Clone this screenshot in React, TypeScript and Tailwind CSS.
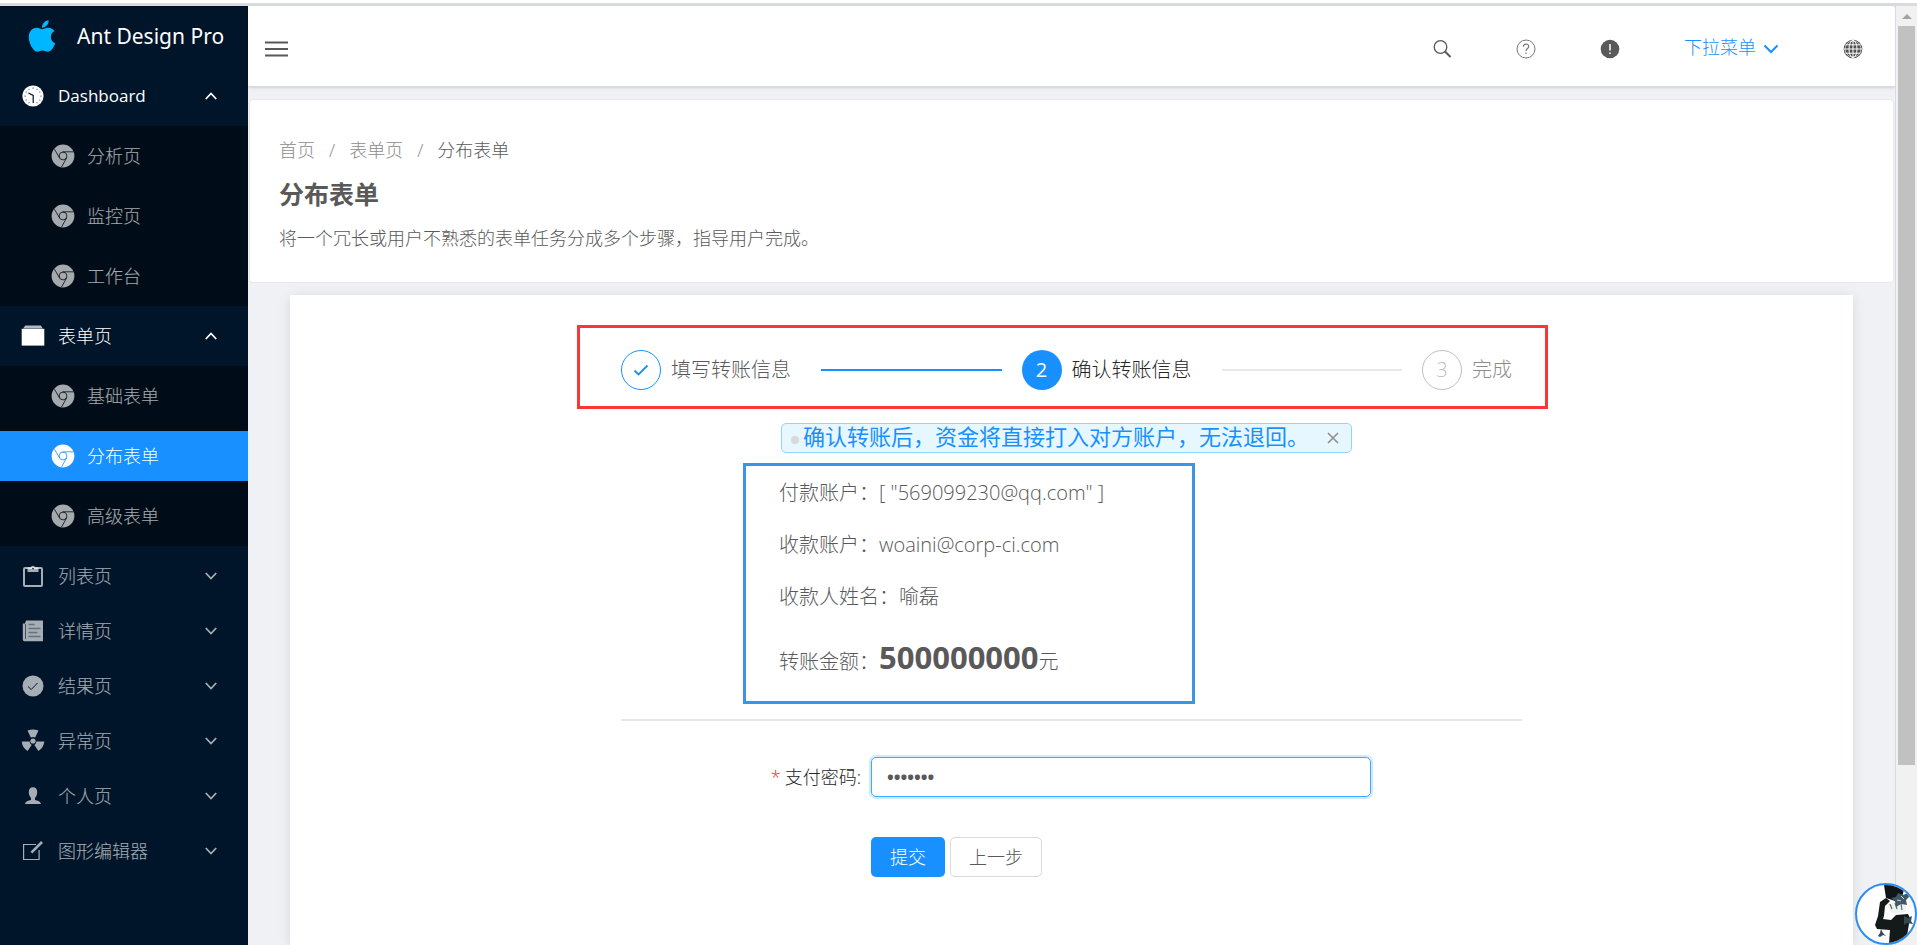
import { useState } from 'react';
import type { ReactNode } from 'react';
import { FaApple } from 'react-icons/fa';

type MenuChild = {
  label: string;
  active?: boolean;
};

type MenuGroup = {
  label: string;
  icon: ReactNode;
  children: MenuChild[];
  open?: boolean;
};

const ChromeIcon = ({ line }: { line: string }) => (
  <svg viewBox="0 0 24 24" className="size-6 shrink-0" fill="currentColor">
    <circle cx="12" cy="12" r="11.4" />
    <g fill="none" stroke={line} strokeWidth=".8">
      <circle cx="12" cy="12" r="3.9" />
      <path d="M11.5 7.8H22.6" />
      <path d="M8.6 14L3.4 5.2" />
      <path d="M15.6 13.8L10.6 23" />
    </g>
  </svg>
);

const ClockIcon = () => (
  <svg viewBox="0 0 22 22" className="size-[22px]">
    <circle cx="11" cy="11" r="10.6" fill="currentColor" />
    <g fill="none" stroke="#001529" strokeWidth="1.2">
      <path d="M6.4 8L11.2 10.4V18" />
    </g>
    <g fill="#001529">
      <circle cx="11" cy="3" r=".6" />
      <circle cx="15" cy="4.2" r=".5" />
      <circle cx="17.9" cy="7" r=".5" />
      <circle cx="19" cy="11" r=".6" />
      <circle cx="17.9" cy="15" r=".5" />
      <circle cx="15" cy="17.8" r=".5" />
      <circle cx="7" cy="17.8" r=".5" />
      <circle cx="4.1" cy="15" r=".5" />
      <circle cx="3" cy="11" r=".6" />
      <circle cx="4.1" cy="7" r=".5" />
      <circle cx="7" cy="4.2" r=".5" />
    </g>
  </svg>
);

const BoxIcon = () => (
  <svg viewBox="0 0 22 22" className="size-[22px] overflow-visible" fill="currentColor">
    <path d="M3.2 .4h15.6l2 3H1.2z" opacity=".7" />
    <path d="M-.3 3.8h22.6v16.8H-.3z" />
  </svg>
);

const ClipboardIcon = () => (
  <svg viewBox="0 0 22 22" className="size-[22px]">
    <rect x="2" y="3" width="18" height="18" rx="1" fill="none" stroke="currentColor" strokeWidth="2" />
    <path d="M5.5 2.5h3.2a2.4 2.4 0 0 1 4.6 0h3.2v4.5h-11z" fill="currentColor" />
    <circle cx="11" cy="3.6" r=".8" fill="#001529" />
  </svg>
);

const ArticleIcon = () => (
  <svg viewBox="0 0 22 22" className="size-[22px]">
    <path d="M4 .5h17v20.8H2.5A1.8 1.8 0 0 1 .8 19.5V3.5H3z" fill="currentColor" />
    <path d="M3.5 4v15" stroke="#001529" strokeWidth=".6" />
    <path d="M6.5 4.5h6M6.5 8.5h12M6.5 12.5h9M6.5 16.5h12" stroke="#66717c" strokeWidth="1.5" />
  </svg>
);

const CheckIcon = () => (
  <svg viewBox="0 0 22 22" className="size-[22px]">
    <circle cx="11" cy="11" r="10.5" fill="currentColor" />
    <path d="M6 11.5l3.2 3L15.5 8" fill="none" stroke="#001529" strokeWidth="1" />
  </svg>
);

const RadiationIcon = () => (
  <svg viewBox="0 0 22 22" className="size-[22px] overflow-visible" fill="currentColor">
    <path d="M5.5 .6a14 14 0 0 1 11 0L13.2 7.6a5 5 0 0 0-4.4 0z" />
    <path d="M-.3 11.6H7.6a4 4 0 0 0 2 3.4L5.6 21A12 12 0 0 1-.3 11.6z" />
    <path d="M22.3 11.6H14.4a4 4 0 0 1-2 3.4L16.4 21A12 12 0 0 0 22.3 11.6z" />
    <circle cx="11" cy="11" r="2.6" />
  </svg>
);

const UserIcon = () => (
  <svg viewBox="0 0 22 22" className="size-[22px]" fill="currentColor">
    <path d="M11 2.2c2.7 0 4.2 1.8 4.2 4.8 0 2.5-.9 4.5-2.2 6v1.9c2.5.6 5.7 1.4 6 4.1H3c.3-2.7 3.5-3.5 6-4.1V13C7.7 11.5 6.800 9.500 6.800 7c0-3 1.500-4.800 4.200-4.800z" />
  </svg>
);

const EditIcon = () => (
  <svg viewBox="0 0 22 22" className="size-[22px]" fill="none" stroke="currentColor">
    <path d="M14 4.5H1.6v15h15.5V10" strokeWidth="1.2" />
    <path d="M9.4 12.6L20 2" strokeWidth="2.6" />
  </svg>
);

const Chevron = ({ up }: { up?: boolean }) => (
  <svg viewBox="0 0 12 8" className="h-2 w-3" fill="none" stroke="currentColor" strokeWidth="1.8">
    <path d={up ? 'M.8 7L6 1.5 11.2 7' : 'M.8 1L6 6.5 11.2 1'} />
  </svg>
);

const menu: MenuGroup[] = [
  {
    label: 'Dashboard',
    icon: <ClockIcon />,
    open: true,
    children: [{ label: '分析页' }, { label: '监控页' }, { label: '工作台' }],
  },
  {
    label: '表单页',
    icon: <BoxIcon />,
    open: true,
    children: [{ label: '基础表单' }, { label: '分布表单', active: true }, { label: '高级表单' }],
  },
  { label: '列表页', icon: <ClipboardIcon />, children: [] },
  { label: '详情页', icon: <ArticleIcon />, children: [] },
  { label: '结果页', icon: <CheckIcon />, children: [] },
  { label: '异常页', icon: <RadiationIcon />, children: [] },
  { label: '个人页', icon: <UserIcon />, children: [] },
  { label: '图形编辑器', icon: <EditIcon />, children: [] },
];

const details = [
  { label: '付款账户', value: '[ "569099230@qq.com" ]' },
  { label: '收款账户', value: 'woaini@corp-ci.com' },
  { label: '收款人姓名', value: '喻磊' },
];

function Sidebar() {
  const [opened, setOpened] = useState(menu.map((group) => !!group.open));

  const toggle = (index: number) => {
    setOpened(opened.map((value, i) => (i === index ? !value : value)));
  };

  return (
    <aside className="w-62 shrink-0 bg-[#001529] text-white/65">
      <div className="flex h-15 items-center gap-[21px] pl-7 text-white">
        <FaApple className="h-9 w-7 text-[#00b7ff]" />
        <span className="font-['Noto_Sans',sans-serif] text-[21px] font-normal whitespace-nowrap">Ant Design Pro</span>
      </div>
      <nav>
        {menu.map((group, index) => (
          <div key={group.label} className={opened[index] ? '' : 'pt-[5px]'}>
            <button
              type="button"
              onClick={() => toggle(index)}
              className={
                opened[index]
                  ? 'flex h-15 w-full items-center pr-[31px] pl-[22px] text-white'
                  : 'flex h-[50px] w-full items-center pr-[31px] pl-[22px]'
              }
            >
              {group.icon}
              <span
                className={
                  group.label === 'Dashboard'
                    ? 'ml-3.5 flex-1 text-left text-[17px] font-normal'
                    : 'ml-3.5 flex-1 text-left'
                }
              >
                {group.label}
              </span>
              <Chevron up={opened[index]} />
            </button>
            {opened[index] && group.children.length > 0 && (
              <ul className="bg-[#000c17]">
                {group.children.map((item) => (
                  <li key={item.label} className="py-[5px]">
                    <a
                      href="#"
                      className={
                        item.active
                          ? 'flex h-[50px] items-center gap-3 bg-[#1890ff] pl-[51px] text-white'
                          : 'flex h-[50px] items-center gap-3 pl-[51px]'
                      }
                    >
                      <ChromeIcon line={item.active ? '#1890ff' : '#000c17'} />
                      {item.label}
                    </a>
                  </li>
                ))}
              </ul>
            )}
          </div>
        ))}
      </nav>
    </aside>
  );
}

function Header() {
  return (
    <header className="flex h-[81px] shrink-0 items-center justify-between rounded-tr border-b border-[#d7dae2] bg-white pt-1.5 pr-8 pl-4 shadow-sm">
      <button type="button" aria-label="menu">
        <svg viewBox="0 0 24 18" className="h-[18px] w-6" stroke="#595959" strokeWidth="2.2">
          <path d="M1 2.5h23M1 9h23M1 15.5h23" />
        </svg>
      </button>
      <div className="flex items-center gap-16">
        <button type="button" aria-label="search">
          <svg viewBox="0 0 20 20" className="size-5" fill="none" stroke="#595959">
            <circle cx="8.5" cy="8" r="6.3" strokeWidth="1.3" />
            <path d="M13 12.5L18.5 18" strokeWidth="2" />
          </svg>
        </button>
        <button type="button" aria-label="help">
          <svg viewBox="0 0 20 20" className="size-5" fill="none" stroke="#777">
            <circle cx="10" cy="10" r="9" />
            <path d="M7.3 7.8c0-3.6 5.4-3.6 5.4-.3 0 2-2.7 2.2-2.7 4.5M10 13.6v1.4" strokeWidth="1.2" />
          </svg>
        </button>
        <button type="button" aria-label="notice">
          <svg viewBox="0 0 20 20" className="size-5">
            <circle cx="10" cy="10" r="9.3" fill="#595959" />
            <path d="M10 5v6.5M10 13.5v1.5" stroke="#fff" strokeWidth="1.5" />
          </svg>
        </button>
        <button type="button" className="flex items-center gap-[7px] text-[#1890ff]">
          <span className="-mt-1">下拉菜单</span>
          <svg viewBox="0 0 16 10" className="h-2.5 w-4" fill="none" stroke="currentColor" strokeWidth="2">
            <path d="M1.5 1.5L8 8l6.5-6.5" />
          </svg>
        </button>
        <button type="button" aria-label="language">
          <svg viewBox="0 0 20 20" className="size-5">
            <circle cx="10" cy="10" r="9.3" fill="#505050" />
            <g fill="none" stroke="#fff" strokeWidth="1">
              <ellipse cx="10" cy="10" rx="4" ry="8.6" />
              <circle cx="10" cy="10" r="8" strokeWidth=".6" />
              <path d="M10 1v18M1 10h18M2.5 5.8h15M2.5 14.2h15" />
            </g>
          </svg>
        </button>
      </div>
    </header>
  );
}

function PageHeader() {
  return (
    <section className="mx-px mt-3 shrink-0 rounded-sm border border-[#e6e8eb] bg-white px-[29px] pt-9 pb-[30px]">
      <ol className="flex h-7 items-center gap-3.5 text-[#8c8c8c]">
        <li>
          <a href="#">首页</a>
        </li>
        <li>/</li>
        <li>
          <a href="#">表单页</a>
        </li>
        <li>/</li>
        <li className="text-[#595959]">分布表单</li>
      </ol>
      <h1 className="mt-3 text-[25px] leading-9 font-bold text-[#595959]">分布表单</h1>
      <p className="mt-3 leading-7">将一个冗长或用户不熟悉的表单任务分成多个步骤，指导用户完成。</p>
    </section>
  );
}

function Steps() {
  return (
    <div className="relative">
      <ol className="flex items-center pr-2.5 text-xl leading-10">
        <li className="flex flex-1 items-center">
          <span className="flex size-10 items-center justify-center rounded-full border border-[#1890ff]">
            <svg viewBox="0 0 16 12" className="h-3 w-4" fill="none" stroke="#1890ff" strokeWidth="1.8">
              <path d="M1.5 6.5l4 4 9-9" />
            </svg>
          </span>
          <span className="ml-2.5">填写转账信息</span>
          <span className="mr-5 ml-[30px] h-0.5 flex-1 bg-[#1890ff]" />
        </li>
        <li className="flex flex-1 items-center">
          <span className="flex size-10 items-center justify-center rounded-full bg-[#1890ff] font-normal text-white">
            2
          </span>
          <span className="ml-2.5 text-[#262626]">确认转账信息</span>
          <span className="mr-5 ml-[30px] h-0.5 flex-1 bg-[#e8e8e8]" />
        </li>
        <li className="flex items-center text-[#8c8c8c]">
          <span className="flex size-10 items-center justify-center rounded-full border border-[#bfbfbf] text-[#bfbfbf]">
            3
          </span>
          <span className="ml-2.5">完成</span>
        </li>
      </ol>
      {/* Highlight frame over the steps */}
      <div className="pointer-events-none absolute -top-[25px] -right-[26px] -bottom-[19px] -left-11 border-3 border-[#fc3535]" />
    </div>
  );
}

function Confirm() {
  const [password, setPassword] = useState('1234567');
  const [showTag, setShowTag] = useState(true);

  return (
    <main className="mx-[42px] mt-3 flex-1 bg-white pt-[55px] shadow-[0_2px_12px_rgba(0,0,0,0.1)]">
      <div className="mx-auto max-w-[901px]">
        <Steps />
        {showTag && (
          <div className="mt-[33px] ml-40 flex h-[30px] w-fit items-center rounded-[5px] border border-[#91d5ff] bg-[#e6f7ff] pr-3 pl-[9px] text-[22px] font-normal whitespace-nowrap text-[#1890ff]">
            <span className="mt-1 mr-1 size-2 rounded-full bg-[#d9d9d9]" />
            <span className="-mt-1">确认转账后，资金将直接打入对方账户，无法退回。</span>
            <button type="button" aria-label="close" className="ml-[18px]" onClick={() => setShowTag(false)}>
              <svg viewBox="0 0 12 12" className="size-3" stroke="#8c8c8c" strokeWidth="1.5">
                <path d="M1 1l10 10M11 1L1 11" />
              </svg>
            </button>
          </div>
        )}

        <div className="mt-2.5 ml-[122px] flex w-[452px] flex-col gap-5 border-3 border-[#3b94e6] pt-[11px] pb-[15px] pl-[33px] text-xl leading-8">
          {details.map((item) => (
            <p key={item.label}>
              {item.label}：{item.value}
            </p>
          ))}
          <p className="leading-12">
            转账金额：<strong className="text-[31px] font-bold">500000000</strong>元
          </p>
        </div>

        <hr className="mt-[15px] h-0.5 border-0 bg-[#e8e8e8]" />

        <form className="mt-9" onSubmit={(e) => e.preventDefault()}>
          <div className="flex items-center">
            <label htmlFor="password" className="w-[250px] pr-2.5 text-right text-[#262626]">
              <span className="mr-1 text-[#f5222d]">*</span>
              支付密码:
            </label>
            <input
              id="password"
              type="password"
              value={password}
              onChange={(e) => setPassword(e.target.value)}
              className="h-10 w-[500px] rounded-[5px] border border-[#40a9ff] px-[15px] font-bold shadow-[0_0_0_2px_rgba(24,144,255,0.2)] outline-none"
            />
          </div>
          <div className="mt-10 flex gap-[5px] pl-[250px]">
            <button type="submit" className="h-10 rounded-[5px] bg-[#1890ff] px-[19px] text-white">
              提交
            </button>
            <button type="button" className="h-10 rounded-[5px] border border-[#d9d9d9] px-[18px]">
              上一步
            </button>
          </div>
        </form>
      </div>
    </main>
  );
}

function Scrollbar() {
  return (
    <div className="flex w-[22px] shrink-0 flex-col items-center border-l border-[#d7dae2] bg-[#f1f1f1]">
      <svg viewBox="0 0 10 5" className="mt-2 h-[5px] w-2.5 shrink-0" fill="#a3a3a3">
        <path d="M5 0l5 5H0z" />
      </svg>
      <div className="mt-[7px] h-[78.7%] w-[17px] bg-[#c1c1c1]" />
    </div>
  );
}

function Avatar() {
  return (
    <div className="fixed right-0 bottom-0 size-[62px] overflow-hidden rounded-full border-2 border-[#2d8cf0] bg-white">
      <svg viewBox="0 0 58 58" className="size-full">
        <path d="M27 0h21l-3 13-4 4-12-4z" fill="#101615" />
        <path d="M23 17l6-4 4 3-5 5-1 10-1 3 8 1 5-5 12-1 2 4-2 12-2 13H32l1-13-13-1-2-4 3-9z" fill="#141a19" />
        <path d="M31 19l9-1 9 3-1 6-10 2-6-3z" fill="#eef2f1" />
        <path d="M33 19l2 5M38 18l2 6M44 19l1 6" stroke="#5d6a6a" strokeWidth="1.2" />
        <path d="M41 8l5 2 5-2 1 4-3 3 1 5-6-1-5 3-1-6-4-3 5-1z" fill="#3f5a66" />
        <path d="M44 11l3 3M40 15l4 1" stroke="#c6d6dc" />
        <path d="M47 31l4 2 4-2-1 5 2 3-6-1-3 2zM24 44l2 4 3 3-3-1-3 2-2-1 2-3z" fill="#354750" />
      </svg>
    </div>
  );
}

export default function App() {
  return (
    <div className="flex h-screen flex-col overflow-hidden bg-white font-['Open_Sans','Noto_Sans_CJK_SC',sans-serif] text-lg font-light text-[#595959]">
      <div className="mt-[3px] h-[3px] shrink-0 bg-[#dadbe1]" />
      <div className="flex min-h-0 flex-1 bg-[#f0f1f5]">
        <Sidebar />
        <div className="flex min-w-0 flex-1 flex-col">
          <Header />
          <PageHeader />
          <Confirm />
        </div>
        <Scrollbar />
      </div>
      <Avatar />
    </div>
  );
}
